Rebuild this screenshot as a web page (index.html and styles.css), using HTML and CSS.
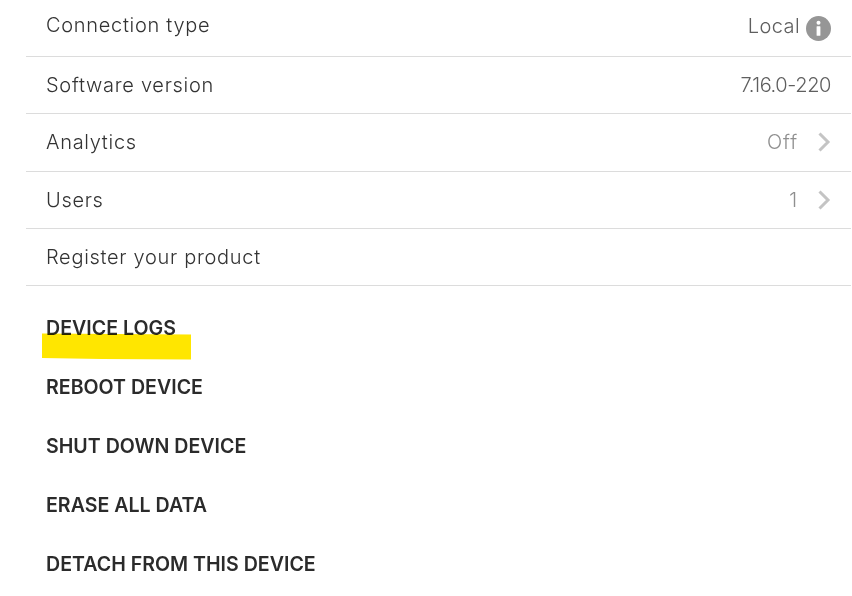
FILE: index.html
```html
<!DOCTYPE html>
<html lang="en">
<head>
<meta charset="utf-8">
<title>Device settings</title>
<link rel="stylesheet" href="styles.css">
</head>
<body>
<main class="panel">
  <ul class="rows">
    <li class="row row-first"><span class="label">Connection type</span><span class="value value-dark"><span class="local">Local</span><svg class="info" width="25" height="25" viewBox="0 0 25 25"><circle cx="12.500" cy="12.500" r="12.500" fill="#969696"/><circle cx="12.500" cy="6.800" r="2" fill="#fff"/><rect x="10.600" y="10.200" width="3.800" height="9.600" rx=".6" fill="#fff"/></svg></span></li>
    <li class="row"><span class="label">Software version</span><span class="value value-dark version">7.16.0-220</span></li>
    <li class="row"><span class="label">Analytics</span><span class="value">Off<svg class="chev" width="13" height="20" viewBox="0 0 13 20"><path d="M1.500 1.500 10 10l-8.500 8.500" fill="none" stroke="#c4c4c4" stroke-width="3"/></svg></span></li>
    <li class="row"><span class="label">Users</span><span class="value">1<svg class="chev" width="13" height="20" viewBox="0 0 13 20"><path d="M1.500 1.500 10 10l-8.500 8.500" fill="none" stroke="#c4c4c4" stroke-width="3"/></svg></span></li>
    <li class="row"><span class="label">Register your product</span></li>
  </ul>
  <div class="actions">
    <a class="action">DEVICE LOGS</a>
    <a class="action">REBOOT DEVICE</a>
    <a class="action">SHUT DOWN DEVICE</a>
    <a class="action">ERASE ALL DATA</a>
    <a class="action">DETACH FROM THIS DEVICE</a>
  </div>
  <div class="marker"></div>
</main>
</body>
</html>
```
FILE: styles.css
```css
* { box-sizing: border-box; }
html, body { margin: 0; padding: 0; background: #fff; }
body { width: 852px; height: 596px; overflow: hidden; font-family: "Inter", "Liberation Sans", sans-serif; }
.panel { position: relative; padding-left: 26px; padding-right: 1px; }
.rows { list-style: none; margin: 0; padding: 0; }
.row { display: flex; justify-content: space-between; align-items: center; height: 57.25px; padding: 0 20px 0 20px; border-bottom: 1px solid #dcdcdc; }
.row-first { height: 57px; padding-bottom: 6px; }
.label { font-size: 20px; line-height: 24px; font-weight: 300; color: #333; letter-spacing: .7px; }
.value { display: flex; align-items: center; gap: 20px; font-size: 20px; line-height: 24px; font-weight: 300; color: #8f8f8f; letter-spacing: .9px; }
.value-dark { color: #5f5f5f; gap: 6px; letter-spacing: .4px; }
.version { letter-spacing: -.4px; }
.local { padding-top: 2px; }
.info { position: relative; top: 3px; }
.actions { display: flex; flex-direction: column; padding: 30px 0 0 20px; gap: 35px; }
.action { font-size: 19.6px; line-height: 24px; font-weight: 600; color: #2b2b2b; letter-spacing: 0; }
.marker { position: absolute; left: 42px; top: 333px; width: 149px; height: 27px; background: #ffe600; mix-blend-mode: multiply; clip-path: polygon(0 .5px, 149px 1.500px, 149px 26.500px, 60px 26px, 0 25px); }
```
